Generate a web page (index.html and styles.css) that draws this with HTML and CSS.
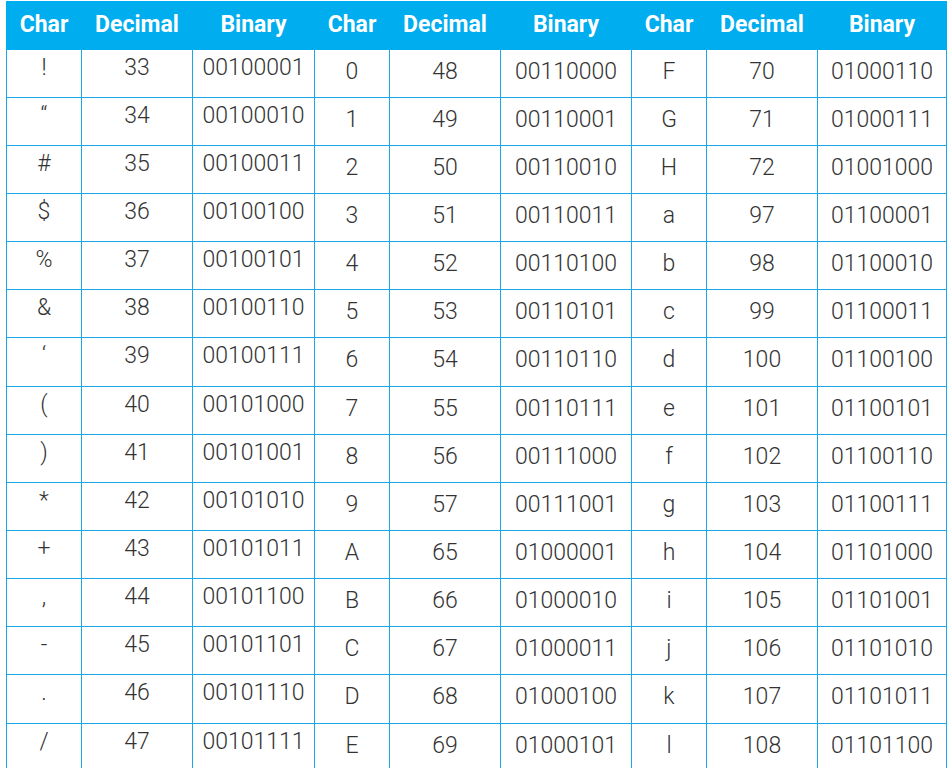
FILE: index.html
```html
<!DOCTYPE html>
<html>
<head>
<meta charset="utf-8">
<link rel="stylesheet" href="styles.css">
</head>
<body>
<table class="ascii">
  <colgroup>
    <col class="c-char"><col class="c-dec"><col class="c-bin1">
    <col class="c-char"><col class="c-dec"><col class="c-bin2">
    <col class="c-char"><col class="c-dec"><col class="c-bin3">
  </colgroup>
  <thead>
    <tr>
      <th>Char</th><th>Decimal</th><th>Binary</th>
      <th>Char</th><th>Decimal</th><th>Binary</th>
      <th>Char</th><th>Decimal</th><th>Binary</th>
    </tr>
  </thead>
  <tbody>
    <tr><td class="g1">!</td><td class="g1">33</td><td class="g1">00100001</td><td>0</td><td>48</td><td>00110000</td><td>F</td><td>70</td><td>01000110</td></tr>
    <tr><td class="g1">“</td><td class="g1">34</td><td class="g1">00100010</td><td>1</td><td>49</td><td>00110001</td><td>G</td><td>71</td><td>01000111</td></tr>
    <tr><td class="g1">#</td><td class="g1">35</td><td class="g1">00100011</td><td>2</td><td>50</td><td>00110010</td><td>H</td><td>72</td><td>01001000</td></tr>
    <tr><td class="g1">$</td><td class="g1">36</td><td class="g1">00100100</td><td>3</td><td>51</td><td>00110011</td><td>a</td><td>97</td><td>01100001</td></tr>
    <tr><td class="g1">%</td><td class="g1">37</td><td class="g1">00100101</td><td>4</td><td>52</td><td>00110100</td><td>b</td><td>98</td><td>01100010</td></tr>
    <tr><td class="g1">&amp;</td><td class="g1">38</td><td class="g1">00100110</td><td>5</td><td>53</td><td>00110101</td><td>c</td><td>99</td><td>01100011</td></tr>
    <tr><td class="g1">‘</td><td class="g1">39</td><td class="g1">00100111</td><td>6</td><td>54</td><td>00110110</td><td>d</td><td>100</td><td>01100100</td></tr>
    <tr><td class="g1">(</td><td class="g1">40</td><td class="g1">00101000</td><td>7</td><td>55</td><td>00110111</td><td>e</td><td>101</td><td>01100101</td></tr>
    <tr><td class="g1">)</td><td class="g1">41</td><td class="g1">00101001</td><td>8</td><td>56</td><td>00111000</td><td>f</td><td>102</td><td>01100110</td></tr>
    <tr><td class="g1">*</td><td class="g1">42</td><td class="g1">00101010</td><td>9</td><td>57</td><td>00111001</td><td>g</td><td>103</td><td>01100111</td></tr>
    <tr><td class="g1">+</td><td class="g1">43</td><td class="g1">00101011</td><td>A</td><td>65</td><td>01000001</td><td>h</td><td>104</td><td>01101000</td></tr>
    <tr><td class="g1">,</td><td class="g1">44</td><td class="g1">00101100</td><td>B</td><td>66</td><td>01000010</td><td>i</td><td>105</td><td>01101001</td></tr>
    <tr><td class="g1">-</td><td class="g1">45</td><td class="g1">00101101</td><td>C</td><td>67</td><td>01000011</td><td>j</td><td>106</td><td>01101010</td></tr>
    <tr><td class="g1">.</td><td class="g1">46</td><td class="g1">00101110</td><td>D</td><td>68</td><td>01000100</td><td>k</td><td>107</td><td>01101011</td></tr>
    <tr><td class="g1">/</td><td class="g1">47</td><td class="g1">00101111</td><td>E</td><td>69</td><td>01000101</td><td>l</td><td>108</td><td>01101100</td></tr>
  </tbody>
</table>
</body>
</html>
```
FILE: styles.css
```css
html, body {
  margin: 0;
  padding: 0;
  background: #ffffff;
}

body {
  padding: 1px 0 0 6px;
  font-family: Roboto, "Liberation Sans", sans-serif;
}

.ascii {
  border-collapse: collapse;
  table-layout: fixed;
  width: 940px;
}

.c-char { width: 75px; }
.c-dec { width: 111px; }
.c-bin1 { width: 122px; }
.c-bin2 { width: 131px; }
.c-bin3 { width: 129px; }

.ascii th {
  background: #00adee;
  color: #ffffff;
  font-weight: 700;
  font-size: 23px;
  height: 48px;
  padding: 0 0 1px;
  text-align: center;
  vertical-align: middle;
  border: 1px solid #00adee;
  border-top: none;
  box-sizing: border-box;
}

.ascii td {
  border: 1px solid #1aa7e6;
  height: 48px;
  box-sizing: border-box;
  padding: 10px 0 0;
  vertical-align: top;
  text-align: center;
  font-size: 23px;
  line-height: 23px;
  font-weight: 300;
  color: #333333;
}

.ascii tbody tr:nth-child(7n) td {
  height: 49px;
}

.ascii td.g1 {
  padding-top: 6px;
}
```
